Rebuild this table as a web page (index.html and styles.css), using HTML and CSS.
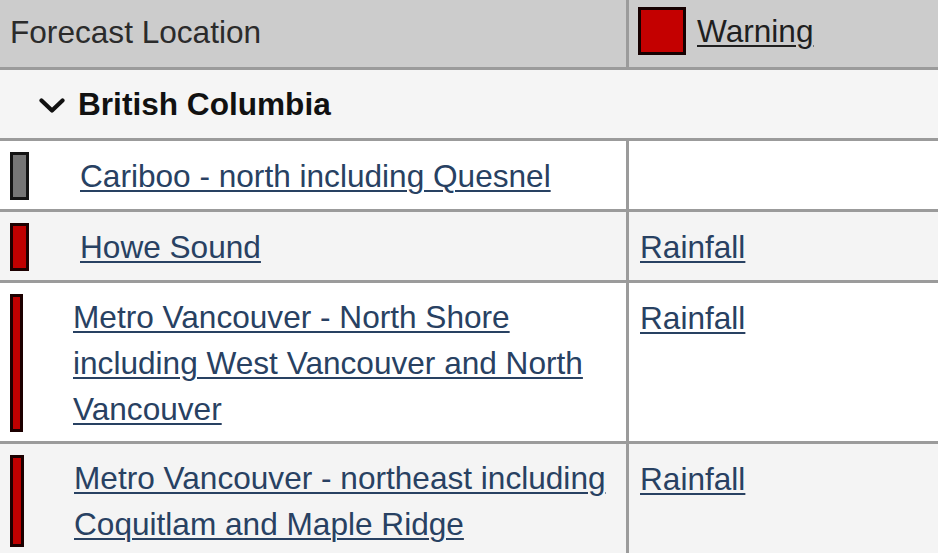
FILE: index.html
```html
<!DOCTYPE html>
<html lang="en">
<head>
<meta charset="utf-8">
<title>Forecast Location warnings</title>
<link rel="stylesheet" href="styles.css">
</head>
<body>
<div class="table">
  <div class="row head">
    <div class="cell left"><span class="head-title">Forecast Location</span></div>
    <div class="cell right head-right"><span class="swatch"></span><a href="#" class="head-link">Warning</a></div>
  </div>
  <div class="row province">
    <svg class="chevron" width="26" height="16" viewBox="0 0 26 16" aria-hidden="true"><polyline points="2.5,2.5 13,12.5 23.5,2.5" fill="none" stroke="#111" stroke-width="4.2" stroke-linecap="round" stroke-linejoin="round"/></svg>
    <span class="province-name">British Columbia</span>
  </div>
  <div class="row item odd">
    <div class="cell left"><span class="ind ind-wide ind-gray"></span><a href="#" class="loc">Cariboo - north including Quesnel</a></div>
    <div class="cell right"></div>
  </div>
  <div class="row item even">
    <div class="cell left"><span class="ind ind-wide ind-red"></span><a href="#" class="loc">Howe Sound</a></div>
    <div class="cell right"><a href="#" class="loc">Rainfall</a></div>
  </div>
  <div class="row item odd">
    <div class="cell left"><span class="ind ind-narrow ind-red"></span><a href="#" class="loc">Metro Vancouver - North Shore including West Vancouver and North Vancouver</a></div>
    <div class="cell right"><a href="#" class="loc">Rainfall</a></div>
  </div>
  <div class="row item even">
    <div class="cell left"><span class="ind ind-narrow2 ind-red"></span><a href="#" class="loc">Metro Vancouver - northeast including Coquitlam and Maple Ridge</a></div>
    <div class="cell right"><a href="#" class="loc">Rainfall</a></div>
  </div>
</div>
</body>
</html>
```
FILE: styles.css
```css
html, body {
  margin: 0;
  padding: 0;
  background: #ffffff;
}
body {
  font-family: "Liberation Sans", Arial, sans-serif;
  font-size: 31.6px;
  line-height: 46px;
  color: #333;
  overflow: hidden;
}
.table {
  width: 938px;
}
.row {
  display: grid;
  grid-template-columns: 629px 1fr;
  border-bottom: 3px solid #9b9b9b;
}
.cell.left {
  border-right: 3px solid #9b9b9b;
  display: flex;
  align-items: center;
  padding: 10px 13px 10px 10px;
}
.head {
  background: #cccccc;
  height: 67px;
}
.head .cell.left {
  padding: 0 10px 4px;
  align-items: center;
}
.head-title {
  color: #2b2b2b;
}
.head-right {
  display: flex;
  align-items: flex-start;
  padding: 7px 0 0 9px;
}
.swatch {
  box-sizing: border-box;
  width: 48px;
  height: 48px;
  background: #c40000;
  border: 3px solid #160000;
  flex: none;
}
.head-link {
  color: #1f1f1f;
  margin-left: 11px;
  line-height: 48px;
  text-decoration: underline;
  text-decoration-thickness: 2px;
  text-underline-offset: 3px;
}
.province {
  display: flex;
  align-items: center;
  height: 68px;
  background: #f5f5f5;
  padding-left: 39px;
}
.chevron {
  flex: none;
  margin-top: 3px;
}
.province-name {
  font-weight: bold;
  color: #111;
  margin-left: 13px;
}
.item.odd { background: #ffffff; }
.item.even { background: #f4f4f4; }
.item .cell.left {
  padding-top: 10.5px;
  padding-bottom: 9.5px;
}
.ind {
  box-sizing: border-box;
  align-self: stretch;
  min-height: 48px;
  border: 3px solid #141414;
  flex: none;
}
.ind-wide { width: 19px; margin-right: 51px; }
.ind-narrow { width: 13px; margin-right: 50px; }
.ind-narrow2 { width: 14px; margin-right: 50px; }
.ind-gray { background: #767676; }
.ind-red { background: #bf0000; border-color: #1c0000; }
.loc {
  color: #284162;
  text-decoration: underline;
  text-decoration-thickness: 2px;
  text-underline-offset: 3px;
}
.item .cell.right {
  padding: 11.5px 10px 10px 11px;
}
```
